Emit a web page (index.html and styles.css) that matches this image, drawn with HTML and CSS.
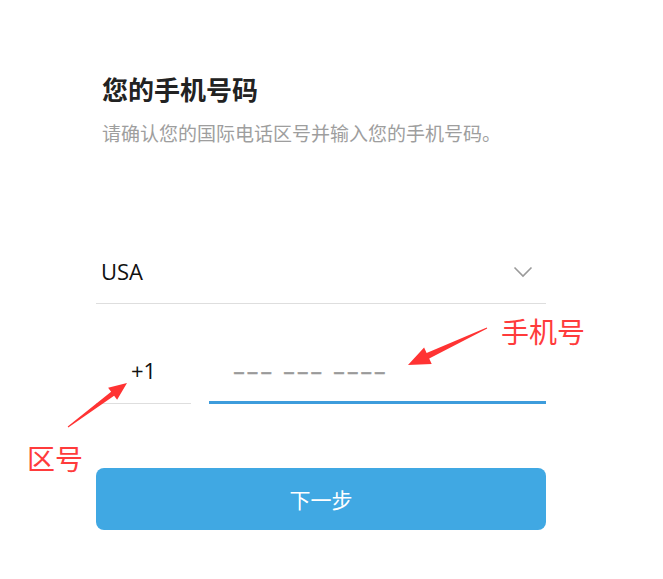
FILE: index.html
```html
<!DOCTYPE html>
<html lang="zh-CN">
<head>
<meta charset="utf-8">
<title>您的手机号码</title>
<link rel="stylesheet" href="styles.css">
</head>
<body>
<div class="page">
  <div class="header">
    <h1 class="title">您的手机号码</h1>
    <p class="subtitle">请确认您的国际电话区号并输入您的手机号码。</p>
  </div>
  <div class="country">
    <span class="country-name">USA</span>
    <svg class="chevron" width="20" height="12" viewBox="0 0 20 12"><path d="M1.5 1.5 L10 10 L18.5 1.5" fill="none" stroke="#9a9a9a" stroke-width="1.6"/></svg>
  </div>
  <div class="phone-row">
    <div class="code">+1</div>
    <div class="number"><span class="placeholder">––– ––– ––––</span></div>
  </div>
  <button class="next">下一步</button>
</div>
<svg class="overlay" width="663" height="579" viewBox="0 0 663 579">
  <polygon fill="#ff3333" points="487.2,328.5 429.2,358.4 431.7,363.9 408,365 424.1,347.5 426.6,353.0 486.8,327.5"/>
  <polygon fill="#ff3333" points="68.3,427.4 114.1,395.8 117.1,399.8 127,383 108.1,387.8 111.1,391.8 67.7,426.6"/>
</svg>
<div class="label label-phone">手机号</div>
<div class="label label-code">区号</div>
</body>
</html>
```
FILE: styles.css
```css
html, body {
  margin: 0;
  padding: 0;
  background: #fff;
}
body {
  width: 663px;
  height: 579px;
  position: relative;
  overflow: hidden;
  font-family: "Open Sans", "Noto Sans CJK SC", sans-serif;
}
.page {
  width: 450px;
  padding: 72px 0 0 96px;
}
.header {
  padding-left: 6px;
}
.title {
  margin: 0;
  font-size: 26px;
  line-height: 34px;
  font-weight: 700;
  color: #222;
  font-family: "Noto Sans CJK SC", sans-serif;
}
.subtitle {
  margin: 15px 0 0;
  font-size: 19px;
  line-height: 24px;
  color: #9e9e9e;
  font-family: "Noto Sans CJK SC", sans-serif;
}
.country {
  margin-top: 102px;
  height: 48px;
  padding: 0 13px 8px 5px;
  display: flex;
  align-items: center;
  justify-content: space-between;
  border-bottom: 1px solid #dedede;
}
.country-name {
  font-size: 22px;
  color: #111;
}
.chevron {
  display: block;
  margin-top: 2px;
}
.phone-row {
  display: flex;
  align-items: flex-end;
  gap: 18px;
  padding-top: 46px;
}
.code {
  width: 95px;
  text-align: center;
  font-size: 22px;
  line-height: 40px;
  color: #111;
  padding-bottom: 13px;
  border-bottom: 1px solid #dedede;
}
.number {
  flex: 1;
  height: 40px;
  padding: 0 0 10px 24px;
  border-bottom: 3px solid #3d9cdc;
  display: flex;
  align-items: center;
}
.placeholder {
  font-size: 24px;
  letter-spacing: 1.6px;
  color: #9a9a9a;
  font-family: "DejaVu Sans", sans-serif;
  position: relative;
  top: 1px;
  -webkit-text-stroke: 0.4px #9a9a9a;
}
.next {
  display: block;
  margin-top: 64px;
  width: 450px;
  height: 62px;
  border: none;
  border-radius: 8px;
  background: #40a8e3;
  color: #fff;
  font-size: 21px;
  font-family: "Noto Sans CJK SC", sans-serif;
  padding: 0;
}
.overlay {
  position: absolute;
  left: 0;
  top: 0;
  pointer-events: none;
}
.label {
  position: absolute;
  font-family: "Noto Sans CJK SC", sans-serif;
  font-size: 28px;
  line-height: 28px;
  color: #ff3b3b;
}
.label-phone {
  left: 501px;
  top: 317px;
}
.label-code {
  left: 27px;
  top: 444px;
}
```
